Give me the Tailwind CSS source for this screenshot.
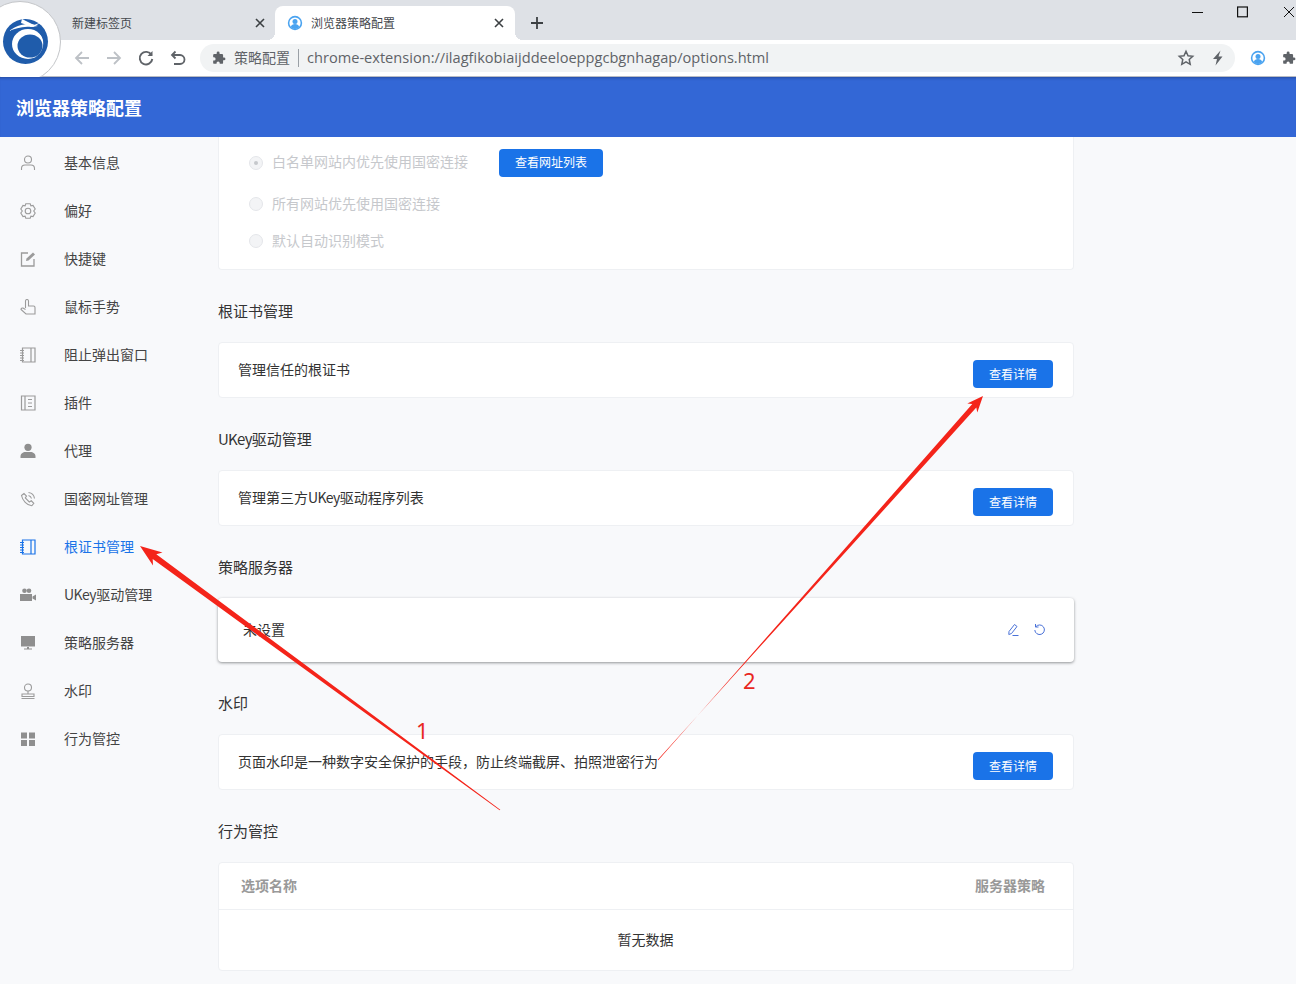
<!DOCTYPE html>
<html lang="zh-CN">
<head>
    <meta charset="UTF-8">
    <title>浏览器策略配置</title>
    <script src="https://cdn.jsdelivr.net/npm/@tailwindcss/browser@4"></script>
</head>
<body class="bg-[#f8f9fb] font-['Noto_Sans_CJK_SC',sans-serif] text-[#333]">
<div class="relative h-[984px] w-[1296px] overflow-hidden">

    <!-- Tab strip -->
    <div class="flex h-10 items-end bg-[#dee1e6]">
        <div class="flex h-[34px] w-[275px] items-center pl-[72px] pr-[9px] text-xs text-[#45484d]">
            <span class="flex-1">新建标签页</span>
            <svg class="h-3 w-3 text-[#3c4043]" viewBox="0 0 12 12" fill="none" stroke="currentColor" stroke-width="1.6"><path d="M2 2l8 8M10 2l-8 8"/></svg>
        </div>
        <div class="relative flex h-[34px] w-[240px] items-center gap-2 rounded-t-lg bg-white pl-3 pr-[10px] text-xs text-[#45484d]">
            <span class="absolute bottom-0 -left-2 h-2 w-2 bg-[radial-gradient(circle_at_0_0,transparent_8px,white_8px)]"></span>
            <span class="absolute bottom-0 -right-2 h-2 w-2 bg-[radial-gradient(circle_at_100%_0,transparent_8px,white_8px)]"></span>
            <svg class="h-4 w-4" viewBox="0 0 16 16"><circle cx="8" cy="8" r="7.2" fill="#4aa3f0"/><circle cx="8" cy="8" r="5.6" fill="#fff"/><circle cx="8" cy="6.4" r="2.5" fill="#4aa3f0"/><path d="M3.8 12c.6-2.2 2.2-3 4.2-3s3.6.8 4.2 3a5.6 5.6 0 0 1-8.4 0z" fill="#4aa3f0"/></svg>
            <span class="flex-1">浏览器策略配置</span>
            <svg class="h-3 w-3 text-[#3c4043]" viewBox="0 0 12 12" fill="none" stroke="currentColor" stroke-width="1.6"><path d="M2 2l8 8M10 2l-8 8"/></svg>
        </div>
        <svg class="mb-[10px] ml-[15px] h-3.5 w-3.5 text-[#3c4043]" viewBox="0 0 14 14" fill="none" stroke="currentColor" stroke-width="1.8"><path d="M7 1v12M1 7h12"/></svg>
        <div class="ml-auto flex h-full items-start pt-1.5">
            <svg class="mr-[34px] h-3 w-[11px]" viewBox="0 0 11 12" fill="none" stroke="#111" stroke-width="1"><path d="M0 6.5h11"/></svg>
            <svg class="mr-[35px] h-3 w-[11px]" viewBox="0 0 11 12" fill="none" stroke="#111" stroke-width="1.2"><rect x=".6" y="1" width="9.8" height="9.8"/></svg>
            <svg class="mr-[1px] h-3 w-3" viewBox="0 0 12 12" fill="none" stroke="#111" stroke-width="1"><path d="M1 1l10 10M11 1L1 11"/></svg>
        </div>
    </div>

    <!-- Toolbar -->
    <div class="flex h-[37px] items-center border-b border-[#b9bcc4] bg-white">
        <div class="ml-[73px] flex w-[127px] items-center gap-[14px]">
            <svg class="h-[18px] w-[18px] text-[#bdc1c6]" viewBox="0 0 18 18" fill="none" stroke="currentColor" stroke-width="1.8"><path d="M16 9H3M9 3L3 9l6 6"/></svg>
            <svg class="h-[18px] w-[18px] text-[#bdc1c6]" viewBox="0 0 18 18" fill="none" stroke="currentColor" stroke-width="1.8"><path d="M2 9h13M9 3l6 6-6 6"/></svg>
            <svg class="h-[18px] w-[18px] text-[#5f6368]" viewBox="0 0 18 18" fill="none" stroke="currentColor" stroke-width="1.9"><path d="M14.5 6A6.3 6.3 0 1 0 15.3 10"/><path d="M15.5 2v5h-5z" fill="currentColor" stroke="none"/></svg>
            <svg class="h-[18px] w-[18px] text-[#5f6368]" viewBox="0 0 18 18" fill="none" stroke="currentColor" stroke-width="1.8"><path d="M6.5 2.5L3 6l3.5 3.5M3 6h8a4 4 0 0 1 0 9H5"/></svg>
        </div>
        <div class="flex h-7 w-[1035px] items-center rounded-full bg-[#f1f3f4] pl-3 pr-[9px] text-sm text-[#5f6368]">
            <svg class="h-3.5 w-3.5 text-[#5f6368]" viewBox="0 0 24 24" fill="currentColor"><path d="M20.5 11H19V7a2 2 0 0 0-2-2h-4V3.5a2.5 2.5 0 0 0-5 0V5H4a2 2 0 0 0-2 2v3.8h1.5a2.7 2.7 0 0 1 0 5.4H2V20a2 2 0 0 0 2 2h3.8v-1.5a2.7 2.7 0 0 1 5.4 0V22H17a2 2 0 0 0 2-2v-4h1.5a2.5 2.5 0 0 0 0-5z"/></svg>
            <span class="-mt-0.5 ml-2">策略配置</span>
            <span class="mx-2 h-[18px] w-px bg-[#9aa0a6]"></span>
            <span class="-mt-0.5 flex-1 font-['Open_Sans',sans-serif] text-[14.6px]">chrome-extension://ilagfikobiaijddeeloeppgcbgnhagap/options.html</span>
            <svg class="mr-[15px] h-[18px] w-[18px] text-[#5f6368]" viewBox="0 0 24 24" fill="none" stroke="currentColor" stroke-width="2"><path d="M12 3l2.7 6 6.3.7-4.7 4.3 1.3 6.5-5.6-3.3-5.6 3.3 1.3-6.5L3 9.700 9.300 9z"/></svg>
            <svg class="h-4 w-4 text-[#5f6368]" viewBox="0 0 16 16" fill="currentColor"><path d="M10.5.5L3 9h4l-1.500 6.500 7-9H8.500z"/></svg>
        </div>
        <svg class="ml-[15px] h-4 w-4" viewBox="0 0 16 16"><circle cx="8" cy="8" r="7.2" fill="#4aa3f0"/><circle cx="8" cy="8" r="5.6" fill="#fff"/><circle cx="8" cy="6.4" r="2.5" fill="#4aa3f0"/><path d="M3.8 12c.6-2.2 2.2-3 4.2-3s3.6.8 4.2 3a5.6 5.6 0 0 1-8.4 0z" fill="#4aa3f0"/></svg>
        <svg class="ml-[16px] h-3.5 w-3.5 shrink-0 text-[#5f6368]" viewBox="0 0 24 24" fill="currentColor"><path d="M20.5 11H19V7a2 2 0 0 0-2-2h-4V3.5a2.5 2.5 0 0 0-5 0V5H4a2 2 0 0 0-2 2v3.8h1.5a2.7 2.7 0 0 1 0 5.4H2V20a2 2 0 0 0 2 2h3.8v-1.5a2.7 2.7 0 0 1 5.4 0V22H17a2 2 0 0 0 2-2v-4h1.5a2.5 2.5 0 0 0 0-5z"/></svg>
    </div>

    <!-- App header -->
    <div class="flex h-[60px] items-center bg-[#3367d6] pl-4 text-lg font-bold text-white shadow-[inset_0_3px_3px_-2px_rgba(20,40,90,0.45)]">浏览器策略配置</div>

    <div class="flex">
        <!-- Sidebar -->
        <nav class="w-[218px] shrink-0 pt-0.5 text-sm text-[#444]">
            <a class="flex h-12 items-center gap-7 pl-5">
                <svg class="h-4 w-4 text-[#9b9b9b]" viewBox="0 0 16 16" fill="none" stroke="currentColor" stroke-width="1.1"><circle cx="8" cy="4.5" r="3.5"/><path d="M1.5 15v-1.500c0-2.500 2-3.500 3.500-3.500h6c1.500 0 3.500 1 3.500 3.500V15"/></svg>
                <span class="-mt-0.5">基本信息</span>
            </a>
            <a class="flex h-12 items-center gap-7 pl-5">
                <svg class="h-4 w-4 text-[#9b9b9b]" viewBox="0 0 16 16" fill="none" stroke="currentColor" stroke-width="1.1"><path d="M5.8.8h4.400l.7 2 2.100-.4 2.200 3.600-1.500 2 1.500 2-2.200 3.600-2.100-.4-.7 2H5.800l-.7-2-2.100.4L.8 10l1.500-2-1.500-2L3 2.400l2.100.4z"/><circle cx="8" cy="8" r="2.8"/></svg>
                <span class="-mt-0.5">偏好</span>
            </a>
            <a class="flex h-12 items-center gap-7 pl-5">
                <svg class="h-4 w-4 text-[#9b9b9b]" viewBox="0 0 16 16" fill="none" stroke="currentColor" stroke-width="1.3"><path d="M8 2H1.500v13h12.500V8"/><path d="M6 10l.5-2.500L13 1.500 15 3.500 8.500 9.500z" fill="currentColor" stroke="none"/></svg>
                <span class="-mt-0.5">快捷键</span>
            </a>
            <a class="flex h-12 items-center gap-7 pl-5">
                <svg class="h-4 w-4 text-[#9b9b9b]" viewBox="0 0 16 16" fill="none" stroke="currentColor" stroke-width="1.1"><path d="M5.5 9V2a1.500 1.500 0 0 1 3 0v5h5c1 0 1.500.7 1.500 1.500V15H6L1 10.500C1 9.500 2 8.700 3 9l2.500 1.500"/></svg>
                <span class="-mt-0.5">鼠标手势</span>
            </a>
            <a class="flex h-12 items-center gap-7 pl-5">
                <svg class="h-4 w-4 text-[#9b9b9b]" viewBox="0 0 16 16" fill="none" stroke="currentColor" stroke-width="1.2"><path d="M2.500 1h12.500v14H2.500zM11 1v14M0 3.500h4M0 6h4M0 8.500h4M0 11h4M0 13.500h4"/></svg>
                <span class="-mt-0.5">阻止弹出窗口</span>
            </a>
            <a class="flex h-12 items-center gap-7 pl-5">
                <svg class="h-4 w-4 text-[#9b9b9b]" viewBox="0 0 16 16" fill="none" stroke="currentColor" stroke-width="1.2"><path d="M1.500 1h13.500v14H1.500zM5 1v14M8 4.500h4M8 8h4M8 11.500h4"/></svg>
                <span class="-mt-0.5">插件</span>
            </a>
            <a class="flex h-12 items-center gap-7 pl-5">
                <svg class="h-4 w-4 text-[#8f8f8f]" viewBox="0 0 16 16" fill="currentColor"><circle cx="8" cy="4.3" r="3.6"/><path d="M.5 15v-1.500C.5 10.500 3 9 5.500 9h5c2.500 0 5 1.500 5 4.500V15z"/></svg>
                <span class="-mt-0.5">代理</span>
            </a>
            <a class="flex h-12 items-center gap-7 pl-5">
                <svg class="h-4 w-4 text-[#9b9b9b]" viewBox="0 0 16 16" fill="none" stroke="currentColor" stroke-width="1.1"><path d="M1.500 4.500L4 2.500l2.500 2.500-1.200 2 4 4 2-1.200 2.500 2.500-2 2.500C7 14.500 2.500 9.500 1.500 4.500zM8.500 1.500a7 7 0 0 1 6 6M8.500 4.500a4 4 0 0 1 3 3"/></svg>
                <span class="-mt-0.5">国密网址管理</span>
            </a>
            <a class="flex h-12 items-center gap-7 pl-5 text-[#1a73e8]">
                <svg class="h-4 w-4" viewBox="0 0 16 16" fill="none" stroke="currentColor" stroke-width="1.2"><path d="M2.500 1h12.500v14H2.500zM11 1v14M0 3.500h4M0 6h4M0 8.500h4M0 11h4M0 13.500h4"/></svg>
                <span class="-mt-0.5">根证书管理</span>
            </a>
            <a class="flex h-12 items-center gap-7 pl-5">
                <svg class="h-4 w-4 text-[#8f8f8f]" viewBox="0 0 16 16" fill="currentColor"><circle cx="4.500" cy="3.800" r="2.300"/><circle cx="9" cy="3.800" r="2.300"/><path d="M0 7h12v7H0zM12.500 9.500L16 7.500v6l-3.500-2z"/></svg>
                <span class="-mt-0.5"><span class="tracking-[-0.5px]">UKey</span>驱动管理</span>
            </a>
            <a class="flex h-12 items-center gap-7 pl-5">
                <svg class="h-4 w-4 text-[#8f8f8f]" viewBox="0 0 16 16" fill="currentColor"><path d="M1 1h14v10.500H1zM7 12h2v1.500h3v1H4v-1h3z"/></svg>
                <span class="-mt-0.5">策略服务器</span>
            </a>
            <a class="flex h-12 items-center gap-7 pl-5">
                <svg class="h-4 w-4 text-[#9b9b9b]" viewBox="0 0 16 16" fill="none" stroke="currentColor" stroke-width="1.1"><circle cx="8" cy="4.500" r="3.500"/><path d="M8 8v3M2 11h12v2.500H2zM1.500 15.500h13"/></svg>
                <span class="-mt-0.5">水印</span>
            </a>
            <a class="flex h-12 items-center gap-7 pl-5">
                <svg class="h-4 w-4 text-[#8f8f8f]" viewBox="0 0 16 16" fill="currentColor"><path d="M1 1.500h6v6H1zM9 1.500h6v6H9zM1 9h6v6H1zM9 9h6v6H9z"/></svg>
                <span class="-mt-0.5">行为管控</span>
            </a>
        </nav>

        <!-- Main column -->
        <main class="w-[856px]">
            <!-- Faded options, scrolled under the header -->
            <section class="h-[133px] rounded-b border border-t-0 border-[#eef0f3] bg-white pl-[30px] pt-3 text-sm text-[#c6c8cc]">
                <div class="flex h-7 items-center">
                    <span class="flex h-3.5 w-3.5 items-center justify-center rounded-full border border-[#e4e6ea] bg-[#f3f4f6]"><span class="h-1 w-1 rounded-full bg-[#c6c8cc]"></span></span>
                    <span class="-mt-1 ml-[9px] w-[227px]">白名单网站内优先使用国密连接</span>
                    <button class="h-7 w-[104px] rounded-sm bg-[#1a73e8] pb-0.5 text-xs text-white">查看网址列表</button>
                </div>
                <div class="mt-[13px] flex h-7 items-center">
                    <span class="h-3.5 w-3.5 rounded-full border border-[#e4e6ea] bg-[#f3f4f6]"></span>
                    <span class="-mt-0.5 ml-[9px]">所有网站优先使用国密连接</span>
                </div>
                <div class="mt-[9px] flex h-7 items-center">
                    <span class="h-3.5 w-3.5 rounded-full border border-[#e4e6ea] bg-[#f3f4f6]"></span>
                    <span class="-mt-0.5 ml-[9px]">默认自动识别模式</span>
                </div>
            </section>

            <h2 class="flex h-[72px] items-center pt-2.5 text-[15px]">根证书管理</h2>
            <section class="flex h-14 items-center justify-between rounded border border-[#eef0f3] bg-white pl-[19px] pr-5 text-sm">
                <span class="-mt-0.5">管理信任的根证书</span>
                <button class="mt-2 h-7 w-20 rounded-sm bg-[#1a73e8] text-xs text-white">查看详情</button>
            </section>

            <h2 class="flex h-[72px] items-center pt-2.5 text-[15px]"><span><span class="tracking-[-0.7px]">UKey</span>驱动管理</span></h2>
            <section class="flex h-14 items-center justify-between rounded border border-[#eef0f3] bg-white pl-[19px] pr-5 text-sm">
                <span class="-mt-0.5">管理第三方<span class="tracking-[-0.6px]">UKey</span>驱动程序列表</span>
                <button class="mt-2 h-7 w-20 rounded-sm bg-[#1a73e8] text-xs text-white">查看详情</button>
            </section>

            <h2 class="flex h-[72px] items-center pt-2.5 text-[15px]">策略服务器</h2>
            <section class="flex h-16 items-center justify-between rounded bg-white pl-[25px] pr-7 text-sm shadow-[0_1px_3px_rgba(60,64,67,0.55)]">
                <span class="-mt-0.5">未设置</span>
                <span class="-mt-0.5 flex items-center gap-[13px] text-[#4a72d8]">
                    <svg class="h-[13px] w-[13px]" viewBox="0 0 13 13" fill="none" stroke="currentColor" stroke-width="1"><path d="M2 8.500L7.500 1.500 10 3.500 4.500 10.500 1.800 11.500zM5.500 12.500h6"/></svg>
                    <svg class="h-[13px] w-[13px]" viewBox="0 0 13 13" fill="none" stroke="currentColor" stroke-width="1"><path d="M2.800 3.800A4.800 4.800 0 1 1 1.800 7"/><path d="M2.500 1v3h3"/></svg>
                </span>
            </section>

            <h2 class="flex h-[72px] items-center pt-2.5 text-[15px]">水印</h2>
            <section class="flex h-14 items-center justify-between rounded border border-[#eef0f3] bg-white pl-[19px] pr-5 text-sm">
                <span class="-mt-0.5">页面水印是一种数字安全保护的手段，防止终端截屏、拍照泄密行为</span>
                <button class="mt-2 h-7 w-20 rounded-sm bg-[#1a73e8] text-xs text-white">查看详情</button>
            </section>

            <h2 class="flex h-[72px] items-center pt-2.5 text-[15px]">行为管控</h2>
            <section class="rounded border border-[#eef0f3] bg-white text-sm">
                <div class="flex h-[47px] items-center justify-between border-b border-[#eef0f3] pl-[22px] pr-7 font-semibold text-[#999]">
                    <span class="-mt-0.5">选项名称</span>
                    <span class="-mt-0.5">服务器策略</span>
                </div>
                <div class="flex h-[60px] items-center justify-center pr-px"><span class="-mt-0.5">暂无数据</span></div>
            </section>
        </main>
    </div>

    <!-- Logo badge lying over the browser chrome -->
    <svg class="absolute left-0 top-0 h-[77px] w-[64px]" viewBox="0 0 64 77">
        <circle cx="20" cy="42" r="40.500" fill="#fff" stroke="#c4c6c9" stroke-width="1"/>
        <circle cx="25.500" cy="41.500" r="22.500" fill="#1f5cab"/>
        <ellipse cx="28" cy="44" rx="16" ry="15" fill="#fff"/>
        <ellipse cx="30" cy="46" rx="12.500" ry="11.500" fill="#1f5cab"/>
        <path d="M38 32c4 3 6 8 5 14-1 5-4 9-8 11 6 0 10-5 11-11 1-6-3-12-8-14z" fill="#1f5cab"/>
        <path d="M9 31C18 24 30 22 38 26L31 27C22 26 15 29 9 31z" fill="#fff"/>
        <path d="M22 19l12 6 8-3-9 5-12-4z" fill="#fff"/>
    </svg>

    <!-- Red annotation arrows drawn on the screenshot -->
    <svg class="absolute left-0 top-0 h-[984px] w-[1296px]" viewBox="0 0 1296 984">
        <polygon points="500.300,809.700 156.300,554.300 162.500,552.600 140,546 153,565.400 152.700,559.100 499.700,810.300" fill="#f4241a"/>
        <polygon points="658.300,760.200 972.300,404 967.300,403.400 983,396 977.300,412.400 976.300,407.600 657.700,759.800" fill="#f4241a"/>
    </svg>
    <span class="absolute left-[416px] top-[715px] font-['Noto_Sans',sans-serif] text-[22px] leading-[30px] text-[#e8281e]">1</span>
    <span class="absolute left-[743px] top-[665px] font-['Noto_Sans',sans-serif] text-[22px] leading-[30px] text-[#e8281e]">2</span>
</div>
</body>
</html>
